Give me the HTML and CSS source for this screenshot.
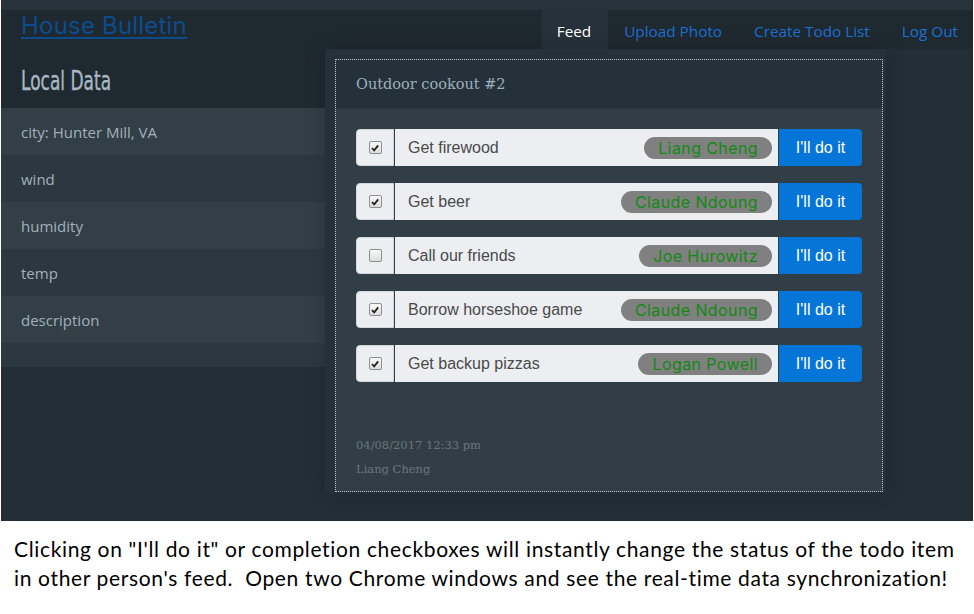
FILE: index.html
```html
<!DOCTYPE html>
<html>
<head>
<meta charset="utf-8">
<title>House Bulletin</title>
<link rel="stylesheet" href="styles.css">
</head>
<body>
<div class="screen">
  <div class="topstrip"></div>
  <header class="navbar">
    <a class="brand" href="#">House Bulletin</a>
    <nav class="nav">
      <a class="nav-link active" href="#">Feed</a>
      <a class="nav-link" href="#">Upload Photo</a>
      <a class="nav-link" href="#">Create Todo List</a>
      <a class="nav-link last" href="#">Log Out</a>
    </nav>
  </header>
  <div class="main">
    <aside class="sidebar">
      <h2 class="sidebar-title"><span class="title-text">Local Data</span></h2>
      <ul class="data-list">
        <li class="data-item">city: Hunter Mill, VA</li>
        <li class="data-item">wind</li>
        <li class="data-item">humidity</li>
        <li class="data-item">temp</li>
        <li class="data-item">description</li>
        <li class="data-item empty"></li>
      </ul>
    </aside>
    <section class="feed">
      <div class="card">
        <div class="card-header">Outdoor cookout #2</div>
        <div class="card-body">
          <div class="todo">
            <span class="addon"><span class="check checked"><svg viewBox="0 0 10 10"><path d="M2 5.2 L4.2 7.4 L8.2 2.4" /></svg></span></span>
            <span class="todo-text"><span class="label">Get firewood</span><span class="badge">Liang Cheng</span></span>
            <button class="do-btn">I'll do it</button>
          </div>
          <div class="todo">
            <span class="addon"><span class="check checked"><svg viewBox="0 0 10 10"><path d="M2 5.2 L4.2 7.4 L8.2 2.4" /></svg></span></span>
            <span class="todo-text"><span class="label">Get beer</span><span class="badge">Claude Ndoung</span></span>
            <button class="do-btn">I'll do it</button>
          </div>
          <div class="todo">
            <span class="addon"><span class="check"></span></span>
            <span class="todo-text"><span class="label">Call our friends</span><span class="badge">Joe Hurowitz</span></span>
            <button class="do-btn">I'll do it</button>
          </div>
          <div class="todo">
            <span class="addon"><span class="check checked"><svg viewBox="0 0 10 10"><path d="M2 5.2 L4.2 7.4 L8.2 2.4" /></svg></span></span>
            <span class="todo-text"><span class="label">Borrow horseshoe game</span><span class="badge">Claude Ndoung</span></span>
            <button class="do-btn">I'll do it</button>
          </div>
          <div class="todo">
            <span class="addon"><span class="check checked"><svg viewBox="0 0 10 10"><path d="M2 5.2 L4.2 7.4 L8.2 2.4" /></svg></span></span>
            <span class="todo-text"><span class="label">Get backup pizzas</span><span class="badge">Logan Powell</span></span>
            <button class="do-btn">I'll do it</button>
          </div>
          <div class="meta">
            <div>04/08/2017 12:33 pm</div>
            <div>Liang Cheng</div>
          </div>
        </div>
      </div>
    </section>
  </div>
</div>
<p class="caption">Clicking on "I'll do it" or completion checkboxes will instantly change the status of the todo item<br>in other person's feed.&nbsp; Open two Chrome windows and see the real-time data synchronization!</p>
</body>
</html>
```
FILE: styles.css
```css
* { box-sizing: border-box; }
html, body { margin: 0; padding: 0; background: #fff; }

.screen {
  width: 972px;
  height: 521px;
  margin-left: 1px;
  background: #232e37;
  overflow: hidden;
  display: flex;
  flex-direction: column;
  font-family: "Open Sans", "Noto Sans", sans-serif;
}
.topstrip { height: 10px; background: #27323b; flex: none; }

.navbar {
  height: 39px;
  flex: none;
  background: #1f2930;
  display: flex;
  justify-content: space-between;
  align-items: stretch;
}
.brand {
  font-family: "Inter", "Open Sans", sans-serif;
  font-size: 24px;
  letter-spacing: 0.2px;
  color: #0d4c8c;
  text-decoration: underline;
  text-underline-offset: 3px;
  padding-left: 20px;
  line-height: 32px;
}
.nav { display: flex; }
.nav-link {
  display: flex;
  align-items: center;
  padding: 2px 16px 0;
  font-size: 15.3px;
  color: #1e6fd0;
  text-decoration: none;
}
.nav-link.active { background: #263139; color: #fff; padding: 2px 17px 0 15px; }
.nav-link.last { padding-right: 15px; }

.main { flex: 1; display: flex; align-items: flex-start; }

.sidebar { width: 324px; flex: none; }
.sidebar-title {
  margin: 0;
  height: 59px;
  background: #1f2930;
  font-family: "DejaVu Sans", sans-serif;
  font-weight: normal;
  font-size: 27px;
  color: #a9b9c3;
  padding-left: 20px;
  display: flex;
  align-items: center;
  padding-top: 4px;
}
.title-text {
  display: inline-block;
  transform: scaleX(0.63);
  transform-origin: left center;
  white-space: nowrap;
  -webkit-text-stroke: 0.4px #a9b9c3;
}
.data-list { list-style: none; margin: 0; padding: 0; }
.data-item {
  height: 47px;
  display: flex;
  align-items: center;
  padding-left: 20px;
  font-size: 15px;
  color: #a2b0ba;
  background: #323f47;
}
.data-item:nth-child(even) { background: #2c3840; }
.data-item.empty { height: 24px; }

.feed {
  width: 561px;
  flex: none;
  background: #25313a;
  padding: 10px 3px 1px 10px;
  box-shadow: 0 0 18px rgba(0, 0, 0, 0.18);
}
.card {
  border: 1px dotted #b9c1c8;
  background: #313e46;
}
.card-header {
  height: 49px;
  background: #25313a;
  border-bottom: 1px solid #2b3740;
  padding: 0 20px;
  display: flex;
  align-items: center;
  font-family: "DejaVu Serif", serif;
  font-size: 14.5px;
  color: #9eb0bb;
}
.card-body { padding: 20px 20px 10px; }

.todo {
  display: flex;
  height: 37px;
  margin-bottom: 17px;
}
.addon {
  width: 38px;
  flex: none;
  background: #eceef1;
  border: 1px solid #d3d7db;
  border-radius: 4px 0 0 4px;
  display: flex;
  align-items: center;
  justify-content: center;
}
.check {
  width: 13px;
  height: 13px;
  border: 1px solid #8f8f8f;
  border-radius: 2px;
  background: linear-gradient(#fafafa, #dcdcdc);
  display: flex;
  align-items: center;
  justify-content: center;
}
.check svg { width: 10px; height: 10px; }
.check path { fill: none; stroke: #222; stroke-width: 1.8; }
.todo-text {
  flex: 1;
  margin-left: 1px;
  background: #eceef1;
  display: flex;
  align-items: center;
  justify-content: space-between;
  padding: 0 6px 0 13px;
}
.label {
  font-family: "Liberation Sans", Arial, sans-serif;
  font-size: 16px;
  color: #4a4a4a;
}
.badge {
  height: 22px;
  border-radius: 11px;
  background: #808080;
  color: #138913;
  font-family: "Inter", "Open Sans", sans-serif;
  font-size: 16px;
  letter-spacing: 0.4px;
  padding: 0 14px;
  display: flex;
  align-items: center;
}
.do-btn {
  width: 83px;
  flex: none;
  margin-left: 1px;
  border: none;
  border-radius: 0 4px 4px 0;
  background: #0675d8;
  color: #fff;
  font-family: "Liberation Sans", Arial, sans-serif;
  font-size: 16px;
  padding: 0;
}

.meta {
  margin-top: 51px;
  font-family: "DejaVu Serif", serif;
  font-size: 11.5px;
  line-height: 24px;
  color: #69767f;
}

.caption {
  margin: 13px 0 0 14px;
  font-family: "Lato", sans-serif;
  font-size: 21px;
  letter-spacing: 0.65px;
  line-height: 29px;
  color: #000;
  white-space: nowrap;
}
```
